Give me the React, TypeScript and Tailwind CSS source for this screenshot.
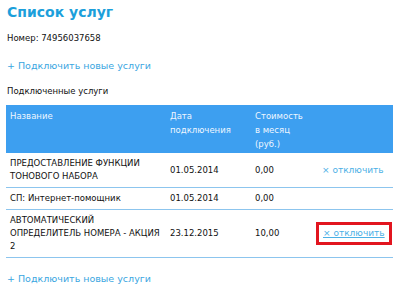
const font = { fontFamily: '"DejaVu Sans", Verdana, sans-serif' };

type Row = { name: string[]; date: string; cost: string; off?: "plain" | "boxed" };

const rows: Row[] = [
  { name: ["ПРЕДОСТАВЛЕНИЕ ФУНКЦИИ", "ТОНОВОГО НАБОРА"], date: "01.05.2014", cost: "0,00", off: "plain" },
  { name: ["СП: Интернет-помощник"], date: "01.05.2014", cost: "0,00" },
  { name: ["АВТОМАТИЧЕСКИЙ", "ОПРЕДЕЛИТЕЛЬ НОМЕРА - АКЦИЯ", "2"], date: "23.12.2015", cost: "10,00", off: "boxed" },
];

const AddLink = () => (
  <a className="text-[9.5px] leading-[14px] text-[#3aa6df]">+ Подключить новые услуги</a>
);

export default function App() {
  return (
    <div className="w-[400px] h-[306px] bg-white overflow-hidden pl-[7px] text-[#111]" style={font}>
      <h1 className="pt-[3px] text-[14px] leading-[18px] font-bold text-[#1c9fdb]">Список услуг</h1>
      <div className="mt-[11px] text-[8.5px] leading-[13px]">Номер: 74956037658</div>
      <div className="mt-[12px] leading-[14px]">
        <AddLink />
      </div>
      <div className="mt-[12px] text-[8.5px] leading-[13px]">Подключенные услуги</div>

      <table className="mt-[7px] -ml-px w-[387px] table-fixed border-collapse text-[8.5px] leading-[13px]">
        <colgroup>
          <col className="w-[160px]" />
          <col className="w-[85px]" />
          <col className="w-[65px]" />
          <col className="w-[77px]" />
        </colgroup>
        <thead>
          <tr className="bg-[#3d9ff0] text-[#eef6ff] align-top">
            <th className="font-normal text-left pl-[4px] pt-[4px] pb-[2px] h-[48px] leading-[14px]">Название</th>
            <th className="font-normal text-left pl-[4px] pt-[4px] leading-[14px]">
              Дата
              <br />
              подключения
            </th>
            <th className="font-normal text-left pl-[4px] pt-[4px] leading-[14px]">
              Стоимость
              <br />в месяц
              <br />
              (руб.)
            </th>
            <th />
          </tr>
        </thead>
        <tbody>
          {rows.map((r, i) => (
            <tr key={i} className="border-b border-[#8cc5ee] align-middle">
              <td className="pl-[4px] pt-[4px] pb-[4px]">
                {r.name.map((n, j) => (
                  <div key={j}>{n}</div>
                ))}
              </td>
              <td className="pl-[4px]">{r.date}</td>
              <td className="pl-[4px]">{r.cost}</td>
              <td className="pl-[0px] whitespace-nowrap">
                {r.off === "plain" && <span className="pl-[6px] text-[9px] text-[#4bb0e6]">× отключить</span>}
                {r.off === "boxed" && (
                  <span className="inline-block border-[3px] border-[#e2151f] px-[4px] py-[2px] text-[9px] leading-[13px] text-[#4bb0e6] underline">
                    × отключить
                  </span>
                )}
              </td>
            </tr>
          ))}
        </tbody>
      </table>

      <div className="mt-[12px] leading-[14px]">
        <AddLink />
      </div>
    </div>
  );
}
